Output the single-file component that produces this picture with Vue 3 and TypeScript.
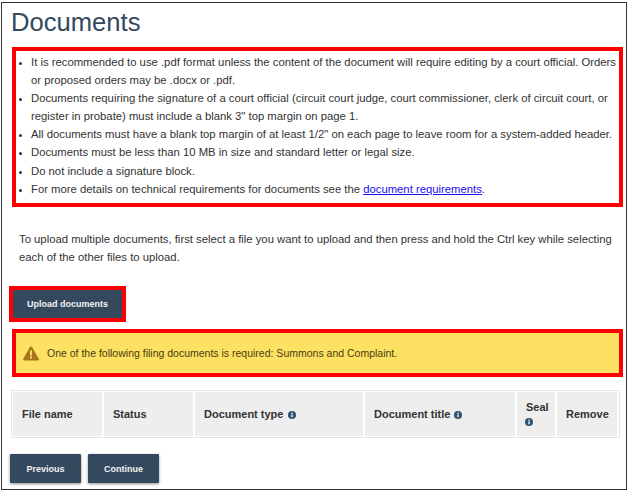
<script setup lang="ts">
const notes: string[] = [
  'It is recommended to use .pdf format unless the content of the document will require editing by a court official. Orders or proposed orders may be .docx or .pdf.',
  'Documents requiring the signature of a court official (circuit court judge, court commissioner, clerk of circuit court, or register in probate) must include a blank 3" top margin on page 1.',
  'All documents must have a blank top margin of at least 1/2" on each page to leave room for a system-added header.',
  'Documents must be less than 10 MB in size and standard letter or legal size.',
  'Do not include a signature block.',
]
</script>

<template>
  <div class="frame">
    <h1 class="title">Documents</h1>
    <div class="notes">
      <ul>
        <li v-for="n in notes" :key="n">{{ n }}</li>
        <li>For more details on technical requirements for documents see the <a href="#">document requirements</a>.</li>
      </ul>
    </div>
    <p class="help">To upload multiple documents, first select a file you want to upload and then press and hold the Ctrl key while selecting each of the other files to upload.</p>
    <div class="upload-ring"><button class="btn upload">Upload documents</button></div>
    <div class="alert">
      <svg class="warn" width="16" height="15" viewBox="0 0 16 15"><path d="M8 0.5c.5 0 .9.3 1.2.8l6.500 11.400c.5.9-.1 1.900-1.200 1.900H1.500c-1.100 0-1.700-1-1.200-1.900L6.800 1.300C7.100.8 7.500.5 8 .5z" fill="#a5771a"/><rect x="7" y="4.500" width="2" height="5" fill="#fde163"/><rect x="7" y="10.500" width="2" height="2" fill="#fde163"/></svg>
      <span>One of the following filing documents is required: Summons and Complaint.</span>
    </div>
    <table class="files">
      <thead>
        <tr>
          <th class="c1">File name</th>
          <th class="c2">Status</th>
          <th class="c3">Document type <svg class="info" viewBox="0 0 8 8"><circle cx="4" cy="4" r="4" fill="#2f5273"/><rect x="3.400" y="3.300" width="1.300" height="3" fill="#fff"/><rect x="3.400" y="1.500" width="1.300" height="1.200" fill="#fff"/></svg></th>
          <th class="c4">Document title <svg class="info" viewBox="0 0 8 8"><circle cx="4" cy="4" r="4" fill="#2f5273"/><rect x="3.400" y="3.300" width="1.300" height="3" fill="#fff"/><rect x="3.400" y="1.500" width="1.300" height="1.200" fill="#fff"/></svg></th>
          <th class="c5">Seal<br /><svg class="info seal-info" viewBox="0 0 8 8"><circle cx="4" cy="4" r="4" fill="#2f5273"/><rect x="3.400" y="3.300" width="1.300" height="3" fill="#fff"/><rect x="3.400" y="1.500" width="1.300" height="1.200" fill="#fff"/></svg></th>
          <th class="c6">Remove</th>
        </tr>
      </thead>
    </table>
    <div class="nav">
      <button class="btn nav-btn prev">Previous</button>
      <button class="btn nav-btn next">Continue</button>
    </div>
  </div>
</template>

<style>
html, body { margin: 0; background: #fff; }
</style>

<style scoped>
.frame {
  box-sizing: border-box;
  width: 626px;
  height: 488px;
  margin: 2px 0 0 1px;
  border: 1px solid #333;
  padding: 0 4px 0 9px;
  font-family: "Liberation Sans", Arial, sans-serif;
  color: #333;
  overflow: hidden;
}
.title {
  margin: 0;
  padding-top: 4px;
  height: 44px;
  box-sizing: border-box;
  font-size: 25.6px;
  line-height: 30px;
  font-weight: 400;
  color: #34495e;
}
.notes {
  box-sizing: border-box;
  width: 611px;
  height: 160px;
  margin-left: 1px;
  border: 4px solid #f00;
  padding: 2px 0 0 0;
}
.notes ul { margin: 0; padding: 0 0 0 15px; }
.notes li {
  font-size: 11.3px;
  line-height: 18.100px;
}
.notes li::marker { font-size: 9px; }
.notes a { color: #1a0dee; }
.help {
  margin: 23px 0 0 8px;
  width: 600px;
  font-size: 11.3px;
  line-height: 18px;
}
.upload-ring {
  width: 117px;
  height: 36px;
  box-sizing: border-box;
  margin: 20px 0 0 -2px;
  border: 4px solid #f00;
}
.btn {
  border: 0;
  background: #34495e;
  color: #f2f2f2;
  font-family: inherit;
  font-size: 9px;
  font-weight: 700;
  padding: 0;
  display: block;
}
.upload { width: 100%; height: 100%; }
.alert {
  box-sizing: border-box;
  width: 611px;
  height: 48px;
  margin: 7px 0 0 1px;
  border: 4px solid #f00;
  background: #fde163;
  display: flex;
  align-items: center;
  gap: 8px;
  padding-left: 7px;
  font-size: 10.500px;
  color: #4a3c10;
}
.warn { flex: none; }
.files {
  margin: 13px 0 0 0;
  width: 609px;
  height: 48px;
  box-sizing: border-box;
  border: 1px solid #e6e6e6;
  border-spacing: 1px;
  table-layout: fixed;
  border-collapse: separate;
}
.files th {
  box-sizing: border-box;
  background: #eee;
  font-size: 11px;
  line-height: 14px;
  font-weight: 700;
  text-align: left;
  padding: 0 0 0 9px;
  color: #333;
  border-right: 1px solid #fff;
}
.c1 { width: 90px; }
.c2 { width: 90px; }
.c3 { width: 169px; }
.c4 { width: 151px; }
.c5 { width: 39px; }
.c6 { width: 61px; }
.info { width: 8px; height: 8px; vertical-align: -0.5px; margin-left: 1px; }
.seal-info { margin-left: -1.500px; }
.nav {
  display: flex;
  gap: 7px;
  margin-top: 16px;
  margin-left: -1px;
}
.nav-btn {
  height: 29px;
  box-shadow: 0 1px 3px rgba(0, 0, 0, 0.45);
  border-radius: 1px;
}
.prev { width: 71px; }
.next { width: 71px; }
</style>
